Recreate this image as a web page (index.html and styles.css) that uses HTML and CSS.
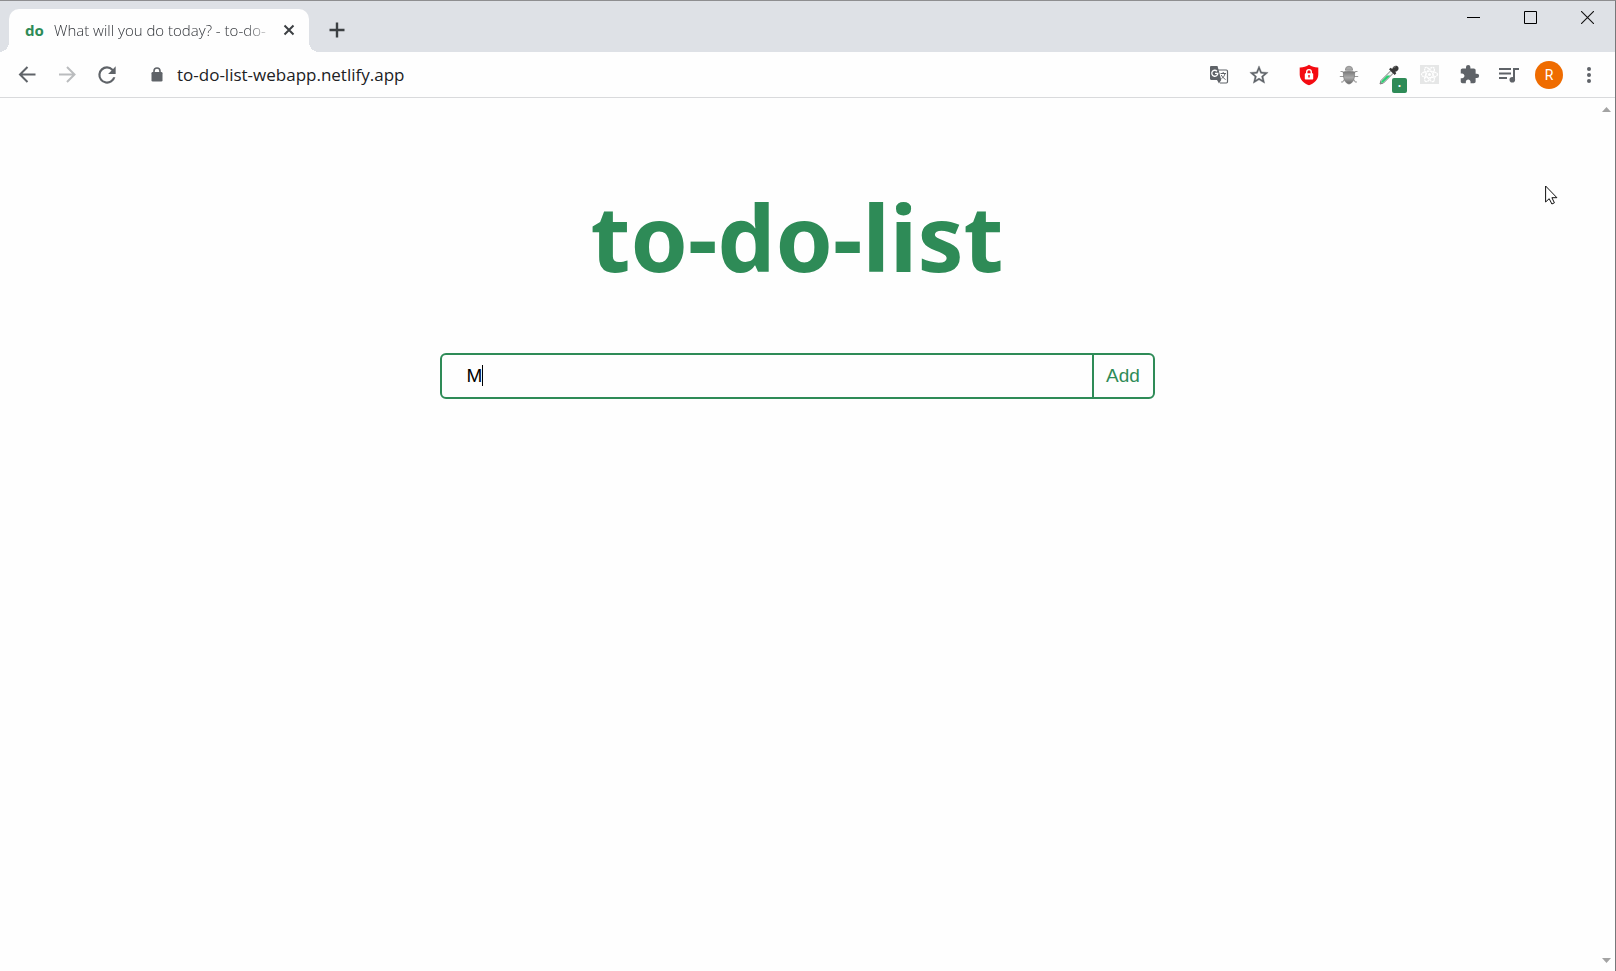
FILE: index.html
```html
<!DOCTYPE html>
<html lang="en">
<head>
<meta charset="utf-8">
<title>What will you do today? - to-do-list</title>
<link rel="stylesheet" href="styles.css">
</head>
<body>
<div class="window">
  <header class="tabstrip">
    <div class="tab">
      <span class="favicon">do</span>
      <span class="tab-title">What will you do today? - to-do-</span>
      <button class="tab-close" aria-label="Close tab"><svg width="12" height="12" viewBox="0 0 12 12"><path d="M1.5 1.5l9 9m0-9l-9 9" stroke="#3c4043" stroke-width="2"/></svg></button>
    </div>
    <button class="new-tab" aria-label="New tab"><svg width="16" height="16" viewBox="0 0 16 16"><path d="M8 .5v15M.5 8h15" stroke="#3c4043" stroke-width="2.4"/></svg></button>
    <div class="controls">
      <button aria-label="Minimize"><svg width="13" height="13" viewBox="0 0 13 13"><path d="M0 6.5h13" stroke="#000"/></svg></button>
      <button aria-label="Maximize"><svg width="13" height="13" viewBox="0 0 13 13"><path d="M.5.5h12v12H.5z" fill="none" stroke="#000"/></svg></button>
      <button aria-label="Close"><svg width="13" height="13" viewBox="0 0 13 13"><path d="M0 0l13 13M13 0L0 13" stroke="#111" stroke-width="1.1"/></svg></button>
    </div>
  </header>

  <nav class="toolbar">
    <button class="tool" aria-label="Back"><svg width="24" height="24" viewBox="0 0 24 24" fill="none" stroke="#5f6368" stroke-width="2"><path d="M20.500 11.500H5M12.500 4L5 11.500l7.500 7.500"/></svg></button>
    <button class="tool" aria-label="Forward"><svg width="24" height="24" viewBox="0 0 24 24" fill="none" stroke="#babcbe" stroke-width="2"><path d="M4 11.500h15.500M12 4l7.500 7.500L12 19"/></svg></button>
    <button class="tool" aria-label="Reload"><svg width="26" height="26" viewBox="0 0 24 24"><path fill="#5f6368" d="M17.650 6.350A7.958 7.958 0 0 0 12 4a8 8 0 1 0 7.730 10h-2.080A6 6 0 1 1 12 6c1.660 0 3.140.69 4.220 1.780L13 11h7V4z"/></svg></button>
    <div class="address">
      <svg class="lock" width="12" height="15" viewBox="0 0 12 15"><path d="M3 6V4a3 3 0 0 1 6 0v2" fill="none" stroke="#5f6368" stroke-width="1.600"/><rect x=".5" y="5" width="11" height="9.500" rx="1.300" fill="#5f6368"/></svg>
      <input class="url" type="text" value="to-do-list-webapp.netlify.app" aria-label="Address">
      <button class="tool" aria-label="Translate page"><svg width="20" height="20" viewBox="0 0 20 20"><path d="M9 5h8.300c.7 0 1.200.5 1.200 1.200v10.600c0 .7-.5 1.200-1.200 1.200H11" fill="#fff" stroke="#5f6368" stroke-width="1.200"/><path d="M2.200 1h6.300l3.800 14H2.200C1.500 15 1 14.500 1 13.800V2.200C1 1.500 1.500 1 2.200 1zM8 15h4.200L10 18.500z" fill="#5f6368"/><path d="M8 6.200a3 3 0 1 0 .8 2.200H6" fill="none" stroke="#fff" stroke-width="1.300"/><path d="M11.500 8.500H17M14.200 7v1.500M16 8.500c-.5 2.600-1.900 4-3.500 5M12.300 10c.7 1.500 2.200 3.200 4.300 4.500" fill="none" stroke="#5f6368"/></svg></button>
      <button class="tool" aria-label="Bookmark"><svg width="22" height="22" viewBox="0 0 24 24"><path fill="#5f6368" stroke="#5f6368" stroke-width=".4" d="M22 9.240l-7.190-.62L12 2 9.190 8.630 2 9.240l5.460 4.730L5.820 21 12 17.270 18.180 21l-1.630-7.030zM12 15.400l-3.760 2.270 1-4.280-3.320-2.880 4.380-.38L12 6.100l1.710 4.040 4.380.38-3.320 2.880 1 4.280z"/></svg></button>
    </div>
    <div class="extensions">
      <button class="tool" aria-label="Ad blocker"><svg width="20" height="22" viewBox="0 0 20 22"><path d="M10 .8C7 2.800 4 3.500.7 3.400v7C.7 15.500 4.500 19 10 21.200c5.500-2.200 9.300-5.700 9.300-10.800v-7C16 3.500 13 2.800 10 .8z" fill="#f40b12"/><path d="M7.700 10V7.900a2.300 2.300 0 0 1 4.600 0V10" fill="none" stroke="#fff" stroke-width="1.400"/><rect x="5.800" y="9.300" width="8.400" height="6.200" rx=".7" fill="#fff"/><path d="M10 11v2.500" stroke="#f40b12" stroke-width="1.400"/></svg></button>
      <button class="tool" aria-label="Bug finder"><svg width="20" height="20" viewBox="0 0 20 20"><defs><linearGradient id="bug" x2="0" y2="1"><stop stop-color="#777"/><stop offset=".5" stop-color="#aaa"/><stop offset="1" stop-color="#666"/></linearGradient></defs><path d="M5.500 8L3.300 6.500H1.500M14.500 8l2.200-1.500h1.800M5 11.500H.8M15 11.500h4.200M5.500 14.500L3.600 17H2M14.500 14.500l1.900 2.500H18" fill="none" stroke="#999" stroke-width="1.100"/><path d="M6.300 5.200a3.700 4 0 0 1 7.400 0z" fill="#aaa" stroke="#888" stroke-width=".8"/><path d="M4.500 7c3.500-1 7.500-1 11 0 .6 6-1.500 11.500-5.500 12C6 18.500 3.900 13 4.500 7z" fill="url(#bug)" stroke="#777" stroke-width=".7"/></svg></button>
      <button class="tool picker" aria-label="Color picker"><svg width="20" height="20" viewBox="0 0 20 20"><path d="M12 5.500L2 15.500 1 19l3.500-1L14.500 8z" fill="#eef5f1" stroke="#777"/><path d="M8 10.500l-5.500 5.500-.5 2 2-.5 7.500-7z" fill="#29ce70"/><path d="M10 4.200l1.700-1.500 1.500 1.300c.4-2.400 2.400-3.700 4.400-3.200 2.300.7 2.600 3.600.8 5-.6.6-1.400.8-2.200.9l1.100 1.600-1.600 1.600z" fill="#393939"/><path d="M14.500 3c.5-1 1.300-1.400 2.200-1.300" stroke="#888" fill="none"/></svg><span class="badge">.</span></button>
      <button class="tool" aria-label="React tools"><svg width="19" height="19" viewBox="0 0 19 19"><path fill="#e6e7e7" d="M0 0h19v19H0z"/><g fill="none" stroke="#fff" stroke-width="1.300" stroke-dasharray="2 .5"><ellipse cx="9.500" cy="9.500" rx="8" ry="3.200"/><ellipse cx="9.500" cy="9.500" rx="8" ry="3.200" transform="rotate(60 9.500 9.500)"/><ellipse cx="9.500" cy="9.500" rx="8" ry="3.200" transform="rotate(120 9.500 9.500)"/></g><circle cx="9.500" cy="9.500" r="1.500" fill="#fff"/></svg></button>
      <button class="tool" aria-label="Extensions"><svg width="21" height="21" viewBox="0 0 24 24"><path fill="#5f6368" d="M20.500 11H19V7c0-1.100-.9-2-2-2h-4V3.500a2.500 2.500 0 0 0-5 0V5H4c-1.100 0-1.990.9-1.990 2v3.800H3.500c1.490 0 2.700 1.210 2.700 2.700s-1.210 2.700-2.700 2.700H2V20c0 1.100.9 2 2 2h3.800v-1.500c0-1.490 1.210-2.700 2.700-2.700s2.700 1.210 2.700 2.700V22H17c1.100 0 2-.9 2-2v-4h1.500a2.500 2.500 0 0 0 0-5z"/></svg></button>
      <button class="tool" aria-label="Media control"><svg width="20" height="18" viewBox="0 0 20 18"><path d="M0 3h12M0 7.500h12M0 12h8" stroke="#5f6368" stroke-width="2"/><path d="M15 13V3h5" fill="none" stroke="#5f6368" stroke-width="2"/><circle cx="13.300" cy="13.800" r="2.800" fill="#5f6368"/></svg></button>
      <button class="tool" aria-label="Profile"><span class="avatar">R</span></button>
      <button class="tool" aria-label="Menu"><svg width="4" height="18" viewBox="0 0 4 18" fill="#5f6368"><circle cx="2" cy="3" r="2"/><circle cx="2" cy="9" r="2"/><circle cx="2" cy="15" r="2"/></svg></button>
    </div>
  </nav>

  <div class="viewport">
    <main class="page">
      <h1>to-do-list</h1>
      <form class="todo-form">
        <label class="field">
          <input type="text" value="M" aria-label="New task">
          <span class="caret"></span>
        </label>
        <button type="button">Add</button>
      </form>
    </main>
    <div class="scrollbar">
      <svg width="9" height="5" viewBox="0 0 9 5"><path d="M4.500 0L9 5H0z" fill="#a3a3a3"/></svg>
      <svg width="9" height="5" viewBox="0 0 9 5"><path d="M4.500 5L9 0H0z" fill="#a3a3a3"/></svg>
    </div>
    <svg class="pointer" width="13" height="20" viewBox="0 0 13 20"><path d="M.6 1v16l3.600-3.300 2.700 5.300 2.500-1.200-2.500-5.100h5z" fill="#fff" stroke="#111"/></svg>
  </div>
</div>
</body>
</html>
```

FILE: styles.css
```css
* { box-sizing: border-box; }

body {
  margin: 0;
  background: #fefefe;
  font-family: "Open Sans", "Noto Sans", sans-serif;
}

button, input {
  margin: 0;
  padding: 0;
  border: 0;
  background: none;
  font: inherit;
  color: inherit;
  outline: none;
}

svg { display: block; flex: none; }

.window {
  display: flex;
  flex-direction: column;
  min-height: 100vh;
  border-top: 1px solid #8e8e90;
  border-right: 1px solid #77787a;
}

.tabstrip {
  display: flex;
  height: 51px;
  padding-left: 9px;
  background: #dee1e6;
}

.tab {
  position: relative;
  display: flex;
  align-items: center;
  width: 300px;
  margin-top: 8px;
  padding: 0 14px 2px 16px;
  border-radius: 10px 10px 0 0;
  background: #fefefe;
}

.tab::before, .tab::after {
  content: "";
  position: absolute;
  bottom: 0;
  width: 10px;
  height: 10px;
}

.tab::before {
  right: 100%;
  background: radial-gradient(circle at 0 0, transparent 10px, #fefefe 10px);
}

.tab::after {
  left: 100%;
  background: radial-gradient(circle at 100% 0, transparent 10px, #fefefe 10px);
}

.favicon {
  width: 29px;
  color: #2e8b57;
  font: bold 15px "Noto Sans", sans-serif;
}

.tab-title {
  flex: 1;
  color: #303338;
  font-size: 15px;
  font-weight: 300;
  white-space: nowrap;
  mask-image: linear-gradient(90deg, #000 190px, transparent 224px);
}

.tab-close {
  display: grid;
  place-items: center;
  width: 12px;
  height: 24px;
}

.new-tab {
  display: grid;
  place-items: center;
  width: 56px;
  height: 58px;
}

.controls {
  display: flex;
  margin-left: auto;
}

.controls button {
  display: grid;
  place-items: center;
  width: 57px;
  height: 33px;
}

.controls { margin-right: -1px; }

.toolbar {
  display: flex;
  align-items: center;
  height: 46px;
  padding: 0 6px 0 7px;
  border-bottom: 1px solid #d9dadc;
}

.tool {
  display: grid;
  place-items: center;
  flex: none;
  width: 40px;
  height: 40px;
}

.address {
  display: flex;
  flex: 1;
  align-items: center;
  padding-left: 24px;
}

.url {
  flex: 1;
  min-width: 0;
  margin-left: 14px;
  color: #202124;
  font-size: 17px;
}

.extensions {
  display: flex;
  margin-left: 10px;
}

.picker { position: relative; }

.badge {
  position: absolute;
  left: 23px;
  top: 23px;
  width: 15px;
  height: 15px;
  border-radius: 2px;
  background: #2e8b57;
  color: #fff;
  font-size: 12px;
  font-weight: bold;
  line-height: 10px;
}

.avatar {
  width: 28px;
  height: 28px;
  border-radius: 50%;
  background: #ef6c00;
  color: #fff;
  font: 14px/28px Roboto, sans-serif;
}

.viewport {
  position: relative;
  display: flex;
  flex: 1;
}

.page {
  display: flex;
  flex: 1;
  flex-direction: column;
  align-items: center;
  padding: 79px 4px 0 0;
}

h1 {
  margin: 0;
  color: #2e8b57;
  font: bold 92px/120px "Noto Sans", sans-serif;
}

.todo-form {
  display: flex;
  width: 715px;
  max-width: 90%;
  height: 46px;
  margin-top: 56px;
  border: 2px solid #2e8b57;
  border-radius: 6px;
  font: 19px "Liberation Sans", Arial, sans-serif;
}

.field {
  position: relative;
  flex: 1;
}

.field input {
  width: 100%;
  height: 100%;
  padding: 0 25px;
}

.caret {
  position: absolute;
  left: 40px;
  top: 10px;
  width: 1px;
  height: 21px;
  background: #000;
}

.todo-form button {
  width: 61px;
  border-left: 2px solid #2e8b57;
  color: #2e8b57;
}

.scrollbar {
  display: flex;
  flex-direction: column;
  align-items: center;
  justify-content: space-between;
  width: 17px;
  padding: 9px 0 8px;
}

.pointer {
  position: absolute;
  right: 57px;
  top: 87px;
}
```
